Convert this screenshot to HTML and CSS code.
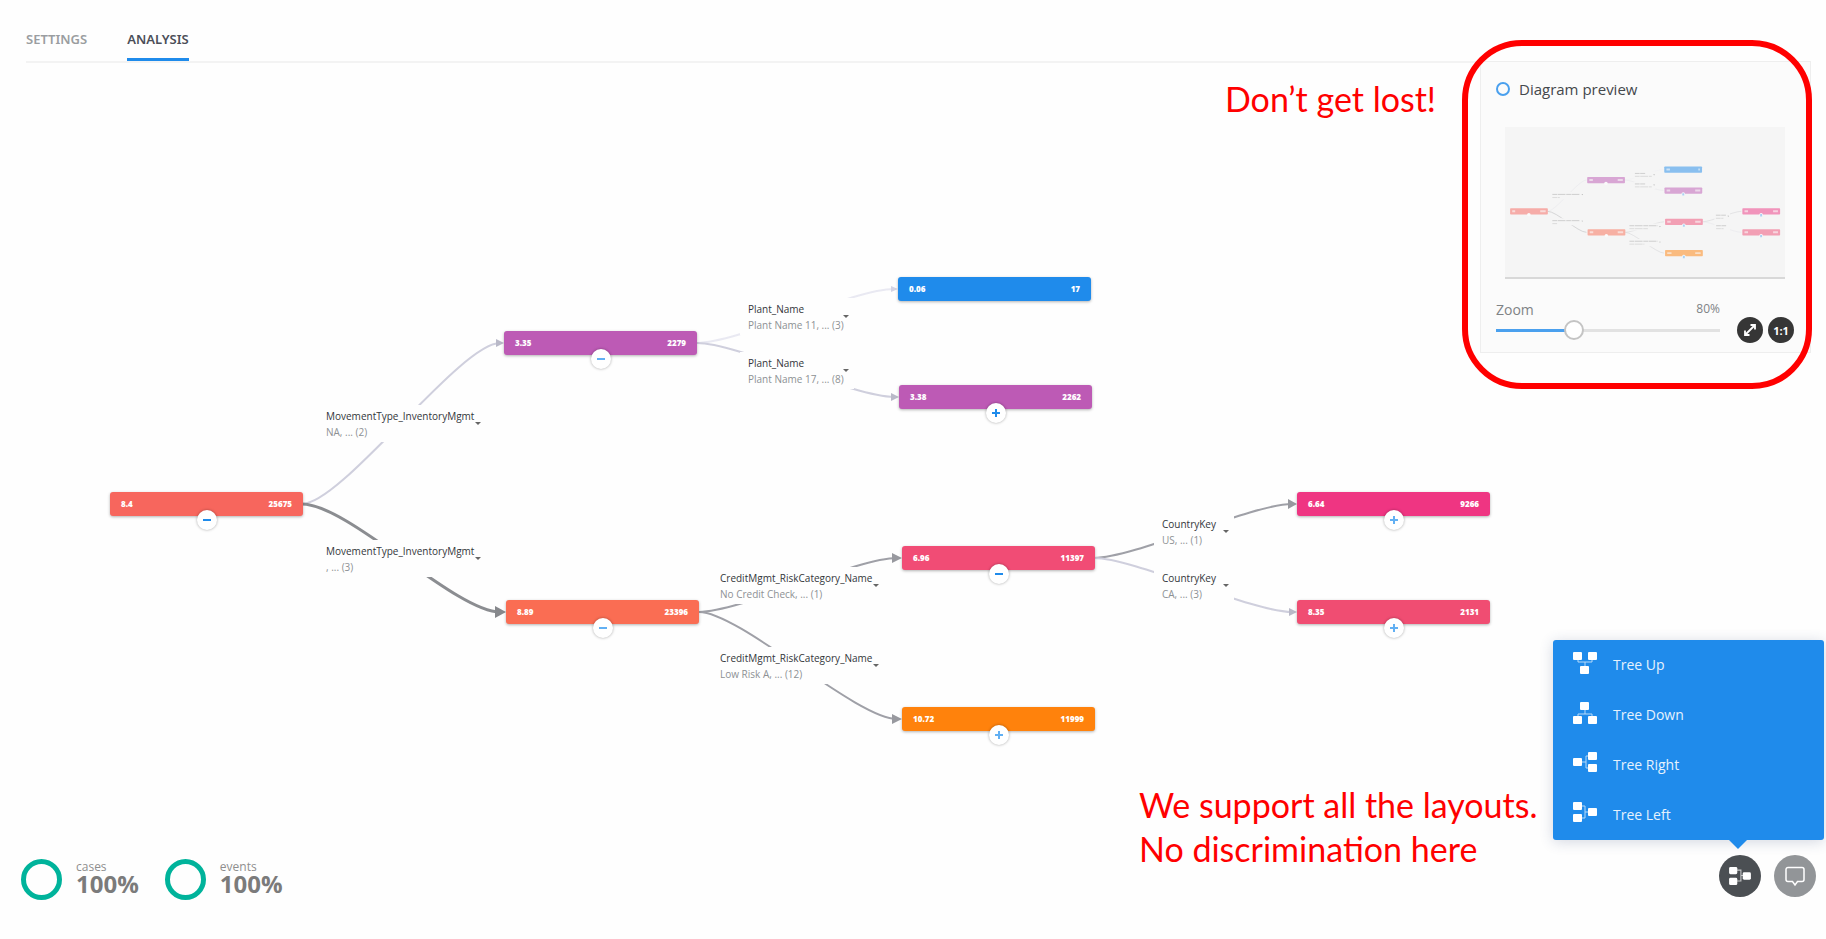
FILE: index.html
```html
<!DOCTYPE html>
<html lang="en">
<head>
<meta charset="utf-8">
<title>Analysis</title>
<link rel="stylesheet" href="styles.css">
</head>
<body>
<div class="page">
  <nav class="tabs">
    <a class="tab" href="#settings">SETTINGS</a>
    <a class="tab tab-active" href="#analysis">ANALYSIS</a>
  </nav>

  <main class="diagram">
    <svg class="edges" aria-hidden="true">
      <defs>
        <g id="edge-lines" fill="none">
          <path class="edge e-light" d="M302 504C342 504 460 343 500 343"/>
          <path class="edge e-thick" d="M302 504C348 504 456 612 500 612"/>
          <path class="edge e-faint" d="M697 343C737 343 854 289 894 289"/>
          <path class="edge e-light" d="M697 343C737 343 854 397 894 397"/>
          <path class="edge e-mid" d="M699 612C739 612 857 558 897 558"/>
          <path class="edge e-mid" d="M699 612C739 612 857 719 897 719"/>
          <path class="edge e-mid" d="M1094 558C1134 558 1252 504 1292 504"/>
          <path class="edge e-light" d="M1094 558C1134 558 1252 612 1292 612"/>
        </g>
      </defs>
      <use href="#edge-lines"/>
      <path fill="#b9b9c8" d="M496 339v8l8-4zM891 393v8l8-4zM1289 608v8l8-4z"/>
      <path fill="#d3d3e4" d="M891 286v6l7-3z"/>
      <path fill="#86888c" d="M495 606v12l11-6z"/>
      <path fill="#98999f" d="M892 553v10l10-5zM892 714v10l10-5zM1288 499v10l9-5z"/>
    </svg>

    <button class="branch b1"><span class="branch-name">MovementType_InventoryMgmt</span><span class="branch-value">NA, ... (2)</span></button>
    <button class="branch b2"><span class="branch-name">MovementType_InventoryMgmt</span><span class="branch-value">, ... (3)</span></button>
    <button class="branch b3"><span class="branch-name">Plant_Name</span><span class="branch-value">Plant Name 11, ... (3)</span></button>
    <button class="branch b4"><span class="branch-name">Plant_Name</span><span class="branch-value">Plant Name 17, ... (8)</span></button>
    <button class="branch b5"><span class="branch-name">CreditMgmt_RiskCategory_Name</span><span class="branch-value">No Credit Check, ... (1)</span></button>
    <button class="branch b6"><span class="branch-name">CreditMgmt_RiskCategory_Name</span><span class="branch-value">Low Risk A, ... (12)</span></button>
    <button class="branch b7"><span class="branch-name">CountryKey</span><span class="branch-value">US, ... (1)</span></button>
    <button class="branch b8"><span class="branch-name">CountryKey</span><span class="branch-value">CA, ... (3)</span></button>

    <div class="node n1"><span>8.4</span><span>25675</span><button class="toggle minus" aria-label="Collapse"></button></div>
    <div class="node n2"><span>3.35</span><span>2279</span><button class="toggle minus soft" aria-label="Collapse"></button></div>
    <div class="node n3"><span>8.89</span><span>23396</span><button class="toggle minus soft" aria-label="Collapse"></button></div>
    <div class="node n4"><span>0.06</span><span>17</span></div>
    <div class="node n5"><span>3.38</span><span>2262</span><button class="toggle minus plus" aria-label="Expand"></button></div>
    <div class="node n6"><span>6.96</span><span>11397</span><button class="toggle minus" aria-label="Collapse"></button></div>
    <div class="node n7"><span>10.72</span><span>11999</span><button class="toggle minus plus soft" aria-label="Expand"></button></div>
    <div class="node n8"><span>6.64</span><span>9266</span><button class="toggle minus plus soft" aria-label="Expand"></button></div>
    <div class="node n9"><span>8.35</span><span>2131</span><button class="toggle minus plus soft" aria-label="Expand"></button></div>
  </main>

  <section class="preview">
    <h2 class="preview-title"><span class="ring-dot"></span>Diagram preview</h2>
    <svg class="thumb" viewBox="84 70 1431 772" preserveAspectRatio="none" aria-hidden="true">
      <g opacity=".5">
        <use href="#edge-lines"/>
        <g fill="#f5f5f5">
          <path d="M318 405h168v37H318zM318 540h168v36H318zM741 298h112v37H741zM741 352h112v37H741zM712 567h172v36H712zM712 647h172v37H712zM1154 513h80v36h-80zM1154 567h80v36h-80z"/>
        </g>
        <g stroke="#a9a9a9" stroke-width="5" stroke-dasharray="24 3 40 4">
          <path d="M326 417h140M326 552h140M748 309h52M748 363h52M720 578h144M720 658h144M1162 524h51M1163 578h51"/>
          <path stroke="#c4c4c4" d="M326 433h38M326 567h26M748 324h86M748 378h86M720 593h94M720 673h76M1162 540h38M1163 593h38"/>
        </g>
        <path fill="#777" d="M475 415h8l-4 6zM475 552h8l-4 6zM842 313h8l-4 6zM842 366h8l-4 6zM872 580h8l-4 6zM872 660h8l-4 6zM1221 527h8l-4 6z"/>
        <rect x="110" y="488" width="193" height="32" rx="4" fill="#f7665d"/>
        <rect x="504" y="327" width="193" height="32" rx="4" fill="#bd5ab5"/>
        <rect x="506" y="596" width="193" height="32" rx="4" fill="#fa6d53"/>
        <rect x="898" y="273" width="193" height="32" rx="4" fill="#1f8beb"/>
        <rect x="899" y="381" width="193" height="32" rx="4" fill="#bd5ab5"/>
        <rect x="902" y="542" width="193" height="32" rx="4" fill="#f14c75"/>
        <rect x="902" y="703" width="193" height="32" rx="4" fill="#ff820c"/>
        <rect x="1297" y="488" width="193" height="32" rx="4" fill="#ef3582"/>
        <rect x="1297" y="596" width="193" height="32" rx="4" fill="#f14c75"/>
        <path stroke="#fff" stroke-opacity=".6" stroke-width="10" d="M121 504h15M264 504h28M515 343h18M660 343h26M517 612h18M660 612h28M909 289h18M1072 289h8M910 397h18M1056 397h26M913 558h18M1056 558h28M913 719h22M1056 719h28M1308 504h18M1454 504h25M1308 612h18M1454 612h25"/>
        <g fill="#fff"><circle cx="206" cy="522" r="9"/><circle cx="600" cy="361" r="9"/><circle cx="602" cy="630" r="9"/><circle cx="995" cy="415" r="9"/><circle cx="998" cy="576" r="9"/><circle cx="998" cy="737" r="9"/><circle cx="1393" cy="522" r="9"/><circle cx="1393" cy="630" r="9"/></g>
        <path fill="#62b0f3" d="M990 411h10v12h-10zM993 572h10v12h-10zM993 733h10v12h-10zM1388 518h10v12h-10zM1388 626h10v12h-10z"/>
      </g>
    </svg>
    <div class="zoom-row">
      <div class="zoom-control">
        <div class="zoom-head"><label for="zoom">Zoom</label><output for="zoom">80%</output></div>
        <input id="zoom" class="slider" type="range" min="0" max="240" value="80">
      </div>
      <div class="zoom-buttons">
        <button class="dot-button" aria-label="Fit to screen">
          <svg width="14" height="14" viewBox="0 0 14 14" fill="none" stroke="#fff" stroke-width="1.800"><path d="M7.500 2h4.500v4.500M12 2L2 12M6.500 12H2V7.500"/></svg>
        </button>
        <button class="dot-button">1:1</button>
      </div>
    </div>
  </section>

  <div class="frame"></div>
  <p class="note note-top">Don’t get lost!</p>
  <p class="note note-bottom">We support all the layouts.<br>No discrimination here</p>

  <footer class="footer">
    <div class="stats">
      <div class="stat"><span class="stat-ring"></span><div class="stat-text"><div class="stat-label">cases</div><div class="stat-value">100%</div></div></div>
      <div class="stat"><span class="stat-ring"></span><div class="stat-text"><div class="stat-label">events</div><div class="stat-value">100%</div></div></div>
    </div>
    <div class="actions">
      <button class="fab fab-dark" aria-label="Layout">
        <svg width="22" height="20" viewBox="0 0 24 22"><path d="M6 4.500h7v12H6M13 10.500h6" fill="none" stroke="#c5c7c8" stroke-width="1.200"/><g fill="#fff"><rect y="1" width="9" height="8" rx="1.500"/><rect y="13" width="9" height="8" rx="1.500"/><rect x="15" y="7" width="9" height="8" rx="1.500"/></g></svg>
      </button>
      <button class="fab" aria-label="Comments">
        <svg width="22" height="22" viewBox="0 0 22 22" fill="none" stroke="#fff" stroke-width="1.500"><path d="M4 2.500h14a2 2 0 0 1 2 2v10a2 2 0 0 1-2 2h-4.500L11 20l-2.500-3.500H4a2 2 0 0 1-2-2v-10a2 2 0 0 1 2-2z"/></svg>
      </button>
      <div class="menu">
        <button class="menu-item"><svg width="24" height="24" viewBox="0 0 24 24"><path d="M5 8v3h14V8M12 11v4" fill="none" stroke="#b7daf9"/><g fill="#fff"><rect width="9" height="8" y="1" rx="1"/><rect width="9" height="8" x="15" y="1" rx="1"/><rect width="9" height="8" x="7" y="15" rx="1"/></g></svg>Tree Up</button>
        <button class="menu-item"><svg width="24" height="24" viewBox="0 0 24 24"><path d="M5 16v-3h14v3M12 13V8" fill="none" stroke="#b7daf9"/><g fill="#fff"><rect width="9" height="8" x="7" y="1" rx="1"/><rect width="9" height="8" y="15" rx="1"/><rect width="9" height="8" x="15" y="15" rx="1"/></g></svg>Tree Down</button>
        <button class="menu-item"><svg width="24" height="24" viewBox="0 0 24 24"><path d="M16 5h-3v12h3M13 11H8" fill="none" stroke="#b7daf9"/><g fill="#fff"><rect width="9" height="8" y="7" rx="1"/><rect width="9" height="8" x="15" y="1" rx="1"/><rect width="9" height="8" x="15" y="13" rx="1"/></g></svg>Tree Right</button>
        <button class="menu-item"><svg width="24" height="24" viewBox="0 0 24 24"><path d="M8 5h4v12H8M12 11h4" fill="none" stroke="#b7daf9"/><g fill="#fff"><rect width="9" height="8" y="1" rx="1"/><rect width="9" height="8" y="13" rx="1"/><rect width="9" height="8" x="15" y="7" rx="1"/></g></svg>Tree Left</button>
      </div>
    </div>
  </footer>
</div>
</body>
</html>
```
FILE: styles.css
```css
* { box-sizing: border-box; }

body {
  margin: 0;
  background: #fefefe;
  font-family: "Open Sans", "Noto Sans", sans-serif;
  color: #3c4046;
}

button {
  border: 0;
  padding: 0;
  font-family: inherit;
  cursor: pointer;
}

.page {
  position: relative;
  display: flex;
  flex-direction: column;
  justify-content: space-between;
  min-height: 100vh;
}

/* Tabs */
.tabs {
  display: flex;
  gap: 40px;
  margin: 0 15px 0 26px;
  padding-top: 30px;
  border-bottom: 2px solid #f3f3f3;
}

.tab {
  height: 31px;
  font-family: "Noto Sans", "Open Sans", sans-serif;
  font-size: 13px;
  line-height: 18px;
  font-weight: 600;
  color: #9a9da0;
  text-decoration: none;
  border-bottom: 3px solid transparent;
}

.tab-active {
  color: #4b4e58;
  border-bottom-color: #1f8beb;
}

/* Diagram */
.diagram {
  position: absolute;
  inset: 0;
}

.edges {
  position: absolute;
  width: 100%;
  height: 100%;
}

.e-light { stroke: #cfcfdd; stroke-width: 2; }
.e-faint { stroke: #e9e9f2; stroke-width: 2; }
.e-mid { stroke: #9fa0a7; stroke-width: 2; }
.e-thick { stroke: #8b8d91; stroke-width: 3; }

.node {
  position: absolute;
  display: flex;
  justify-content: space-between;
  width: 193px;
  padding: 0 11px;
  border-radius: 3px;
  box-shadow: 0 1px 3px rgba(0, 0, 0, .3);
  font-size: 8px;
  line-height: 24px;
  font-weight: 800;
  color: #fff;
}

.n1 { left: 110px; top: 492px; background: #f7665d; }
.n2 { left: 504px; top: 331px; background: #bd5ab5; }
.n3 { left: 506px; top: 600px; background: #fa6d53; }
.n4 { left: 898px; top: 277px; background: #1f8beb; }
.n5 { left: 899px; top: 385px; background: #bd5ab5; }
.n6 { left: 902px; top: 546px; background: #f14c75; }
.n7 { left: 902px; top: 707px; background: #ff820c; }
.n8 { left: 1297px; top: 492px; background: #ef3582; }
.n9 { left: 1297px; top: 600px; background: #f04d72; }

.toggle {
  position: absolute;
  left: calc(50% - 10px);
  top: 18px;
  width: 20px;
  height: 20px;
  border-radius: 50%;
  background: #fff;
  box-shadow: 0 0 3px rgba(0, 0, 0, .35);
  color: #1f8beb;
}

.soft { color: #62b0f3; }

.minus::before,
.plus::after {
  content: "";
  position: absolute;
  left: 6px;
  top: 9px;
  width: 8px;
  height: 2px;
  background: currentColor;
}

.plus::after { transform: rotate(90deg); }

.branch {
  position: absolute;
  display: flex;
  flex-direction: column;
  align-items: flex-start;
  height: 37px;
  padding: 3px 0 0 8px;
  background: #fefefe;
  font-size: 10px;
  line-height: 16px;
  white-space: nowrap;
}

.branch::after {
  content: "";
  position: absolute;
  right: 5px;
  top: 17px;
  border: 3px solid transparent;
  border-top-color: #666;
  border-bottom: 0;
}

.branch-name { color: #33363a; }
.branch-value { color: #8d9194; }

.b1 { left: 318px; top: 405px; width: 168px; }
.b2 { left: 318px; top: 540px; width: 168px; }
.b3 { left: 740px; top: 298px; width: 114px; }
.b4 { left: 740px; top: 352px; width: 114px; }
.b5 { left: 712px; top: 567px; width: 172px; }
.b6 { left: 712px; top: 647px; width: 172px; }
.b7 { left: 1154px; top: 513px; width: 80px; }
.b8 { left: 1154px; top: 567px; width: 80px; }

/* Preview panel */
.preview {
  position: absolute;
  top: 61px;
  right: 15px;
  width: 331px;
  padding: 16px 15px 12px;
  background: #fbfbfb;
  border: 1px solid #eee;
}

.preview-title {
  display: flex;
  align-items: center;
  gap: 9px;
  margin: 0 0 27px;
  font-size: 15px;
  line-height: 22px;
  font-weight: 400;
  color: #44484c;
}

.ring-dot {
  width: 14px;
  height: 14px;
  border: 2px solid #4aa0ee;
  border-radius: 50%;
}

.thumb {
  display: block;
  width: 280px;
  height: 152px;
  margin-left: 9px;
  background: #f5f5f5;
  border-bottom: 2px solid #d8d8d8;
}

.zoom-row {
  display: flex;
  align-items: flex-end;
  gap: 17px;
  margin-top: 21px;
}

.zoom-control { flex: 0 0 224px; }

.zoom-head {
  display: flex;
  justify-content: space-between;
  font-size: 14px;
  line-height: 20px;
  color: #7f8386;
}

.zoom-head output { font-size: 12px; line-height: 18px; }

.slider {
  display: block;
  width: 100%;
  height: 20px;
  margin: 0;
  appearance: none;
  background: linear-gradient(90deg, #4aa0ee 35%, #e2e2e2 35%) center / 100% 3px no-repeat;
}

.slider::-webkit-slider-thumb {
  appearance: none;
  width: 20px;
  height: 20px;
  border: 2px solid #c4c4c4;
  border-radius: 50%;
  background: #fff;
}

.zoom-buttons {
  display: flex;
  gap: 5px;
  margin-bottom: -3px;
}

.dot-button {
  display: grid;
  place-items: center;
  width: 26px;
  height: 26px;
  border-radius: 50%;
  background: #363636;
  font-size: 11px;
  font-weight: 700;
  color: #fff;
}

/* Annotations */
.frame {
  position: absolute;
  top: 40px;
  right: 14px;
  width: 350px;
  height: 349px;
  border: 6px solid #f00;
  border-radius: 60px;
  pointer-events: none;
}

.note {
  position: absolute;
  margin: 0;
  font-family: Lato, sans-serif;
  font-size: 34px;
  line-height: 44px;
  color: #f00;
  white-space: nowrap;
}

.note-top { left: 1225px; top: 77px; }
.note-bottom { left: 1139px; bottom: 68px; }

/* Footer */
.footer {
  position: relative;
  display: flex;
  justify-content: space-between;
  align-items: flex-start;
  padding: 0 10px 39px 21px;
}

.stats,
.stat,
.actions { display: flex; }

.stats { gap: 26px; padding-top: 4px; }
.stat { gap: 14px; }
.stat-text { padding-top: 1px; }

.stat-ring {
  width: 41px;
  height: 41px;
  border: 5px solid #00b39b;
  border-radius: 50%;
}

.stat-label {
  font-size: 12px;
  line-height: 14px;
  color: #8e8e8e;
}

.stat-value {
  font-size: 24px;
  line-height: 20px;
  font-weight: 700;
  color: #7b7b7b;
}

.actions { gap: 13px; }

.fab {
  display: grid;
  place-items: center;
  width: 42px;
  height: 42px;
  border-radius: 50%;
  background: #929598;
}

.fab-dark { background: #4b4f53; }

.menu {
  position: absolute;
  right: 2px;
  bottom: 99px;
  display: flex;
  flex-direction: column;
  width: 271px;
  border-radius: 3px;
  background: #1f8beb;
  box-shadow: 0 2px 14px rgba(40, 60, 110, .2);
}

.menu::after {
  content: "";
  position: absolute;
  right: 77px;
  top: 100%;
  border: 9px solid transparent;
  border-top-color: #1f8beb;
  border-bottom: 0;
}

.menu-item {
  display: flex;
  gap: 16px;
  height: 50px;
  padding: 11px 20px;
  background: none;
  font-size: 14px;
  line-height: 28px;
  color: #e6f2fd;
  text-align: left;
}
```
